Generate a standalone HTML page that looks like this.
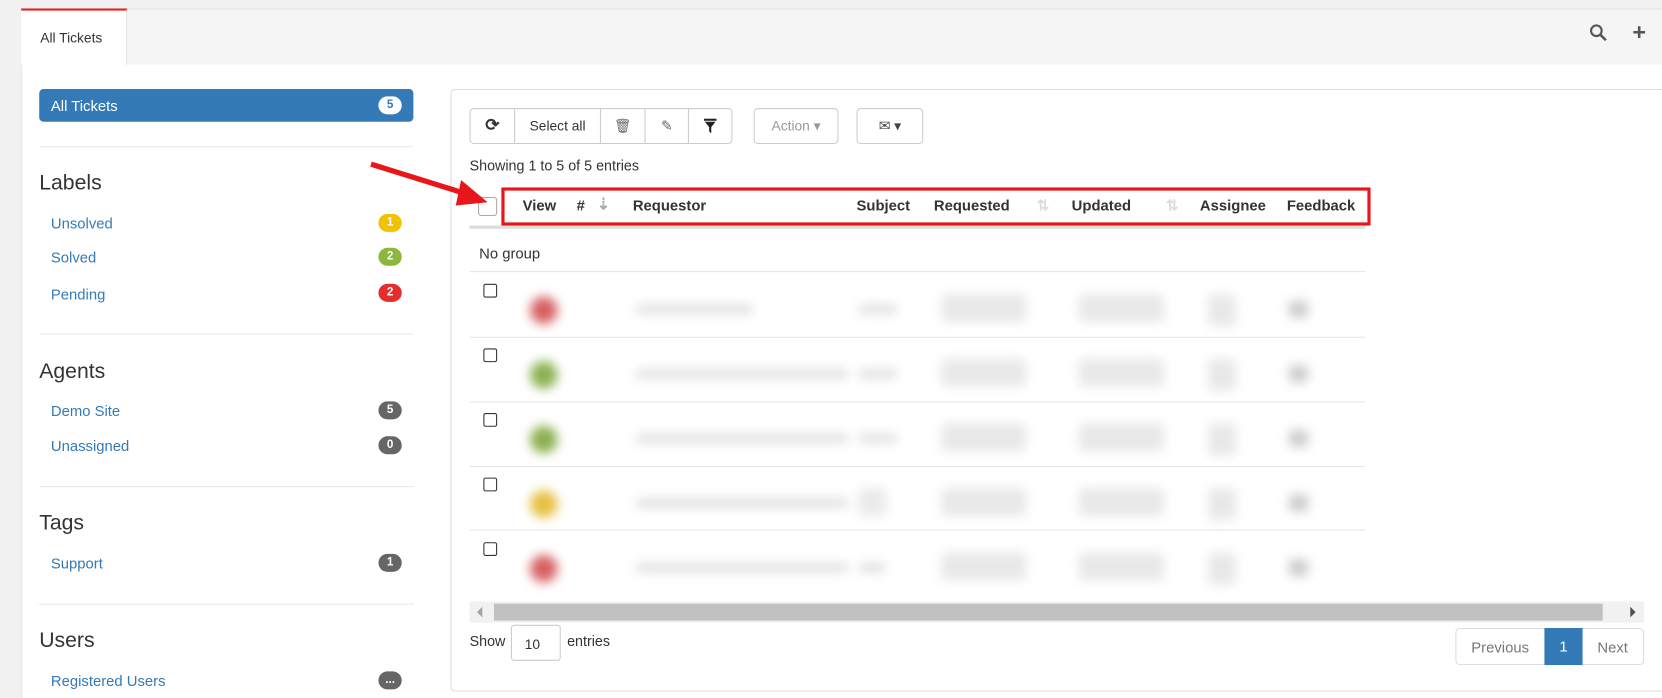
<!DOCTYPE html>
<html><head><style>
*{box-sizing:border-box;margin:0;padding:0}
body{width:1662px;height:698px;overflow:hidden;background:#f1f1f1;font-family:"Liberation Sans",sans-serif;color:#333}
#w{position:absolute;left:0;top:0;width:1568px;height:659px;transform:scale(1.06,1.059);transform-origin:0 0}
.a{position:absolute}
.t{font-size:14px;white-space:nowrap}
.lk{color:#337ab7}
.bd{position:absolute;left:357px;width:22px;height:17px;border-radius:9px;color:#fff;font-size:11px;font-weight:bold;text-align:center;line-height:17px}
.hr{position:absolute;left:37px;width:353px;height:1px;background:#e8e8e8}
h3{position:absolute;left:37px;font-size:20px;font-weight:normal;color:#333}
.btn{position:absolute;top:102px;height:34px;border:1px solid #ccc;background:#fff;font-size:13px;text-align:center;line-height:32px}
.th{position:absolute;top:186px;font-size:14px;font-weight:bold}
.cb{position:absolute;left:456px;width:13px;height:13px;border:1.5px solid #333;border-radius:2px;background:#fff}
.rl{position:absolute;left:443px;width:845px;height:1px;background:#e5e5e5}
.bl{position:absolute;filter:blur(5px);background:#ddd;border-radius:3px}
</style></head><body><div id="w">
<div class="a" style="left:20px;top:8px;width:1548px;height:651px;background:#fff;border-left:1px solid #e6e6e6"></div>
<div class="a" style="left:20px;top:8px;width:1548px;height:53px;background:#f5f5f5;border-top:1px solid #e2e2e2"></div>
<div class="a" style="left:20px;top:8px;width:100px;height:53px;background:#fff;border-top:2px solid #e62020;border-right:1px solid #e2e2e2"></div>
<div class="a t" style="left:38px;top:28px;font-size:13px">All Tickets</div>
<svg class="a" style="left:1499px;top:22px" width="18" height="18" viewBox="0 0 18 18"><circle cx="7" cy="7" r="5" fill="none" stroke="#555" stroke-width="2"/><path d="M11 11l5 5" stroke="#555" stroke-width="2.4"/></svg>
<div class="a" style="left:1540px;top:22px;font-size:22px;font-weight:bold;color:#555;line-height:18px">+</div>

<div class="a" style="left:37px;top:84px;width:353px;height:31px;background:#337ab7;border-radius:4px"></div>
<div class="a t" style="left:48px;top:92px;color:#fff">All Tickets</div>
<div class="bd" style="top:91px;background:#fff;color:#337ab7">5</div>
<div class="hr" style="top:138px"></div>
<h3 style="top:162px">Labels</h3>
<div class="a t lk" style="left:48px;top:203px">Unsolved</div><div class="bd" style="top:202px;background:#f2c200">1</div>
<div class="a t lk" style="left:48px;top:235px">Solved</div><div class="bd" style="top:234px;background:#8cb63c">2</div>
<div class="a t lk" style="left:48px;top:270px">Pending</div><div class="bd" style="top:268px;background:#e52d2d">2</div>
<div class="hr" style="top:315px"></div>
<h3 style="top:340px">Agents</h3>
<div class="a t lk" style="left:48px;top:380px">Demo Site</div><div class="bd" style="top:379px;background:#666">5</div>
<div class="a t lk" style="left:48px;top:413px">Unassigned</div><div class="bd" style="top:412px;background:#666">0</div>
<div class="hr" style="top:459px"></div>
<h3 style="top:483px">Tags</h3>
<div class="a t lk" style="left:48px;top:524px">Support</div><div class="bd" style="top:523px;background:#666">1</div>
<div class="hr" style="top:570px"></div>
<h3 style="top:594px">Users</h3>
<div class="a t lk" style="left:48px;top:635px">Registered Users</div><div class="bd" style="top:634px;background:#666">...</div>

<div class="a" style="left:425px;top:84px;width:1150px;height:569px;border:1px solid #ddd;border-radius:4px"></div>
<div class="btn" style="left:443px;width:43px;border-radius:4px 0 0 4px;font-size:16px;font-weight:bold">⟳</div>
<div class="btn" style="left:485px;width:82px">Select all</div>
<div class="btn" style="left:566px;width:43px;color:#666">🗑</div>
<div class="btn" style="left:608px;width:42px;color:#666">✎</div>
<div class="btn" style="left:649px;width:42px;border-radius:0 4px 4px 0"><svg width="12" height="14" viewBox="0 0 12 14" style="margin-top:9px"><path d="M0 0h12v2H0zM1 3h10L7 8v6L5 12V8z" fill="#222"/></svg></div>
<div class="btn" style="left:711px;width:80px;border-radius:4px;color:#999">Action ▾</div>
<div class="btn" style="left:808px;width:63px;border-radius:4px;color:#444">✉ ▾</div>
<div class="a t" style="left:443px;top:149px;font-size:13.5px">Showing 1 to 5 of 5 entries</div>

<div class="a" style="left:443px;top:213px;width:845px;height:3px;background:#ddd"></div>
<div class="a" style="left:451px;top:186px;width:18px;height:18px;border:1px solid #aaa;border-radius:3px;background:#fff"></div>
<div class="a" style="left:473px;top:177px;width:820px;height:36px;border:3px solid #e8161b"></div>
<div class="th" style="left:493px">View</div>
<div class="th" style="left:544px">#</div>
<div class="th" style="left:563px;color:#aaa;font-size:15px;top:184px">⇣</div>
<div class="th" style="left:597px">Requestor</div>
<div class="th" style="left:808px">Subject</div>
<div class="th" style="left:881px">Requested</div>
<div class="th" style="left:978px;color:#ddd">⇅</div>
<div class="th" style="left:1011px">Updated</div>
<div class="th" style="left:1100px;color:#ddd">⇅</div>
<div class="th" style="left:1132px">Assignee</div>
<div class="th" style="left:1214px">Feedback</div>
<svg class="a" style="left:345px;top:148px" width="120" height="50"><path d="M5 7L98 36" stroke="#e8161b" stroke-width="5"/><path d="M90 22L115 43L85 46z" fill="#e8161b"/></svg>

<div class="a t" style="left:452px;top:231px">No group</div>
<div class="rl" style="top:256px"></div>
<div class="rl" style="top:318px"></div>
<div class="rl" style="top:379px"></div>
<div class="rl" style="top:440px"></div>
<div class="rl" style="top:500px"></div>
<div class="cb" style="top:268px"></div>
<div class="cb" style="top:329px"></div>
<div class="cb" style="top:390px"></div>
<div class="cb" style="top:451px"></div>
<div class="cb" style="top:512px"></div>

<div class="bl" style="left:500px;top:280px;width:26px;height:26px;border-radius:13px;background:#d86060"></div>
<div class="bl" style="left:500px;top:341px;width:26px;height:26px;border-radius:13px;background:#8cb050"></div>
<div class="bl" style="left:500px;top:402px;width:26px;height:26px;border-radius:13px;background:#8cb050"></div>
<div class="bl" style="left:500px;top:463px;width:26px;height:26px;border-radius:13px;background:#e6c040"></div>
<div class="bl" style="left:500px;top:524px;width:26px;height:26px;border-radius:13px;background:#d86060"></div>
<div class="bl" style="left:600px;top:288px;width:110px;height:8px"></div>
<div class="bl" style="left:600px;top:349px;width:200px;height:8px"></div>
<div class="bl" style="left:600px;top:410px;width:200px;height:8px"></div>
<div class="bl" style="left:600px;top:471px;width:200px;height:8px"></div>
<div class="bl" style="left:600px;top:532px;width:200px;height:8px"></div>
<div class="bl" style="left:888px;top:278px;width:80px;height:26px;background:#e8e8e8"></div>
<div class="bl" style="left:888px;top:339px;width:80px;height:26px;background:#e8e8e8"></div>
<div class="bl" style="left:888px;top:400px;width:80px;height:26px;background:#e8e8e8"></div>
<div class="bl" style="left:888px;top:461px;width:80px;height:26px;background:#e8e8e8"></div>
<div class="bl" style="left:888px;top:522px;width:80px;height:26px;background:#e8e8e8"></div>
<div class="bl" style="left:1018px;top:278px;width:80px;height:26px;background:#e8e8e8"></div>
<div class="bl" style="left:1018px;top:339px;width:80px;height:26px;background:#e8e8e8"></div>
<div class="bl" style="left:1018px;top:400px;width:80px;height:26px;background:#e8e8e8"></div>
<div class="bl" style="left:1018px;top:461px;width:80px;height:26px;background:#e8e8e8"></div>
<div class="bl" style="left:1018px;top:522px;width:80px;height:26px;background:#e8e8e8"></div>
<div class="bl" style="left:1140px;top:278px;width:26px;height:30px;background:#e8e8e8"></div>
<div class="bl" style="left:1140px;top:339px;width:26px;height:30px;background:#e8e8e8"></div>
<div class="bl" style="left:1140px;top:400px;width:26px;height:30px;background:#e8e8e8"></div>
<div class="bl" style="left:1140px;top:461px;width:26px;height:30px;background:#e8e8e8"></div>
<div class="bl" style="left:1140px;top:522px;width:26px;height:30px;background:#e8e8e8"></div>
<div class="bl" style="left:1216px;top:284px;width:18px;height:16px;background:#ccc"></div>
<div class="bl" style="left:1216px;top:345px;width:18px;height:16px;background:#ccc"></div>
<div class="bl" style="left:1216px;top:406px;width:18px;height:16px;background:#ccc"></div>
<div class="bl" style="left:1216px;top:467px;width:18px;height:16px;background:#ccc"></div>
<div class="bl" style="left:1216px;top:528px;width:18px;height:16px;background:#ccc"></div>
<div class="bl" style="left:810px;top:288px;width:36px;height:8px"></div>
<div class="bl" style="left:810px;top:349px;width:36px;height:8px"></div>
<div class="bl" style="left:810px;top:410px;width:36px;height:8px"></div>
<div class="bl" style="left:810px;top:461px;width:26px;height:26px;background:#eaeaea"></div>
<div class="bl" style="left:810px;top:532px;width:26px;height:8px"></div>

<div class="a" style="left:443px;top:568px;width:1108px;height:20px;background:#f1f1f1"></div>
<div class="a" style="left:466px;top:570px;width:1046px;height:16px;background:#c1c1c1"></div>
<div class="a" style="left:450px;top:573px;width:0;height:0;border:5px solid transparent;border-right-color:#a3a3a3;border-left:0"></div>
<div class="a" style="left:1538px;top:573px;width:0;height:0;border:5px solid transparent;border-left-color:#505050;border-right:0"></div>

<div class="a t" style="left:443px;top:598px;font-size:13.5px">Show</div>
<div class="a" style="left:482px;top:590px;width:47px;height:34px;border:1px solid #ccc;border-radius:3px;font-size:13px;padding:10px 0 0 12px">10</div>
<div class="a t" style="left:535px;top:598px;font-size:13.5px">entries</div>
<div class="a" style="left:1373px;top:593px;width:178px;height:35px;border:1px solid #ddd;border-radius:4px"></div>
<div class="a t" style="left:1388px;top:603px;color:#777">Previous</div>
<div class="a" style="left:1457px;top:593px;width:36px;height:35px;background:#337ab7;color:#fff;font-size:14px;text-align:center;line-height:35px">1</div>
<div class="a t" style="left:1507px;top:603px;color:#777">Next</div>
</div></body></html>
